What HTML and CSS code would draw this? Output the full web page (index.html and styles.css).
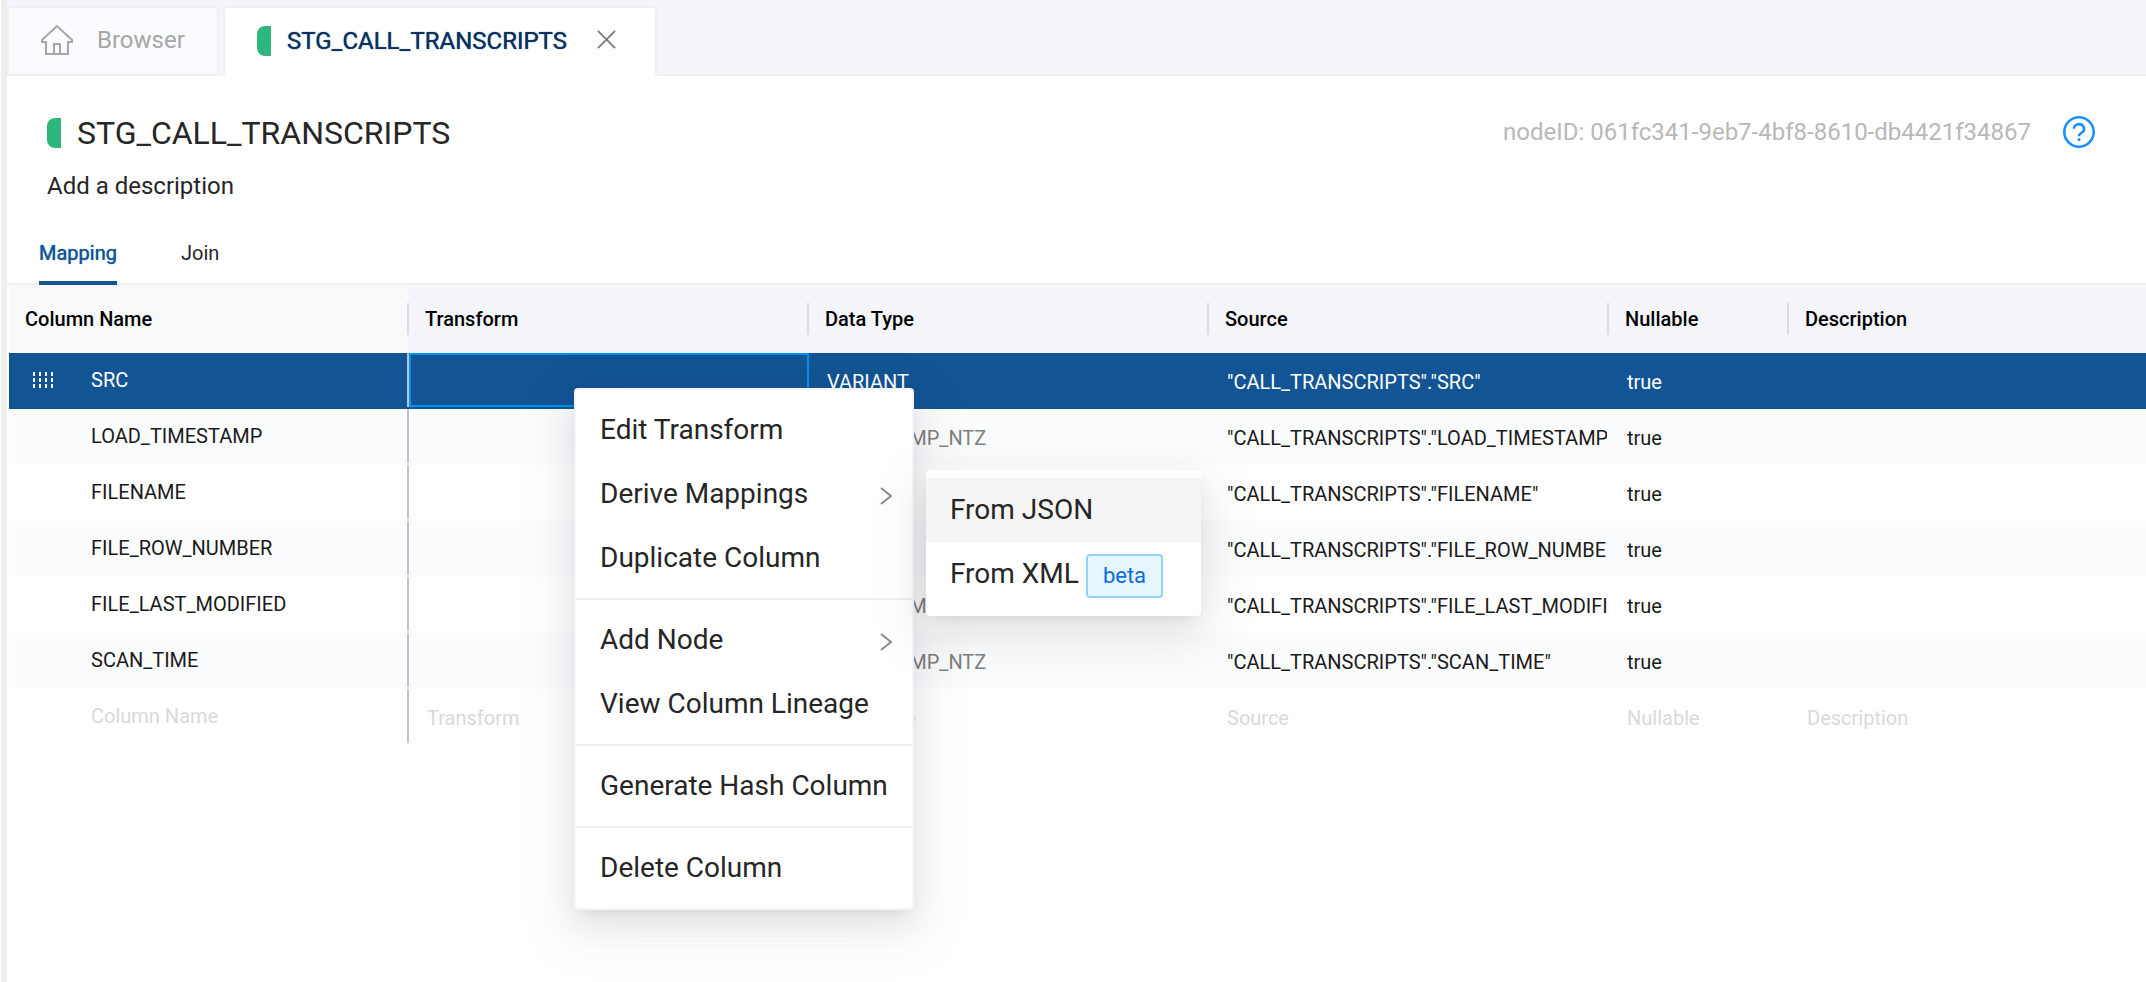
FILE: index.html
```html
<!DOCTYPE html>
<html lang="en">
<head>
<meta charset="utf-8">
<title>STG_CALL_TRANSCRIPTS</title>
<link rel="stylesheet" href="styles.css">
</head>
<body>
<div class="app">
  <nav class="tabs" aria-label="Open tabs">
    <button class="tab tab-home" type="button">
      <svg class="home-icon" viewBox="0 0 34 34" aria-hidden="true"><path d="M6 19H2v-2L17 3l15 14v2h-4v12H6zM14 31V21h6v10" /></svg>
      <span>Browser</span>
    </button>
    <div class="tab tab-active">
      <span class="node-mark"></span>
      <span class="tab-title">STG_CALL_TRANSCRIPTS</span>
      <button class="close" type="button" aria-label="Close tab">
        <svg viewBox="0 0 20 20" aria-hidden="true"><path d="M1 1l18 18M19 1L1 19" /></svg>
      </button>
    </div>
    <div class="tabs-rest"></div>
  </nav>

  <header class="node-head">
    <div class="title-row">
      <span class="node-mark"></span>
      <h1>STG_CALL_TRANSCRIPTS</h1>
      <span class="node-id">nodeID: 061fc341-9eb7-4bf8-8610-db4421f34867</span>
      <button class="help" type="button" aria-label="Help">
        <svg viewBox="0 0 32 32" aria-hidden="true"><circle cx="16" cy="16" r="14.7" /><path d="M11 12.8a5 4.6 0 1 1 7.4 4c-1.6.9-2.4 1.6-2.4 3.4" /><path class="dot" d="M14.7 22.3h2.6v2.6h-2.6z" /></svg>
      </button>
    </div>
    <p class="description">Add a description</p>
  </header>

  <div class="subtabs" role="tablist">
    <button class="subtab selected" type="button" role="tab" aria-selected="true">Mapping</button>
    <button class="subtab" type="button" role="tab" aria-selected="false">Join</button>
  </div>

  <main class="grid-wrap">
    <table class="grid">
      <colgroup><col class="wide"><col class="wide"><col class="wide"><col class="wide"><col class="narrow"><col></colgroup>
      <thead>
        <tr><th><span>Column Name</span></th><th><span>Transform</span></th><th><span>Data Type</span></th><th><span>Source</span></th><th><span>Nullable</span></th><th><span>Description</span></th></tr>
      </thead>
      <tbody>
        <tr class="picked"><td><div class="name"><svg class="grip" viewBox="0 0 20 16" aria-hidden="true"><path d="M1 0v16M7 0v16M13 0v16M19 0v16" /></svg>SRC</div></td><td class="focus"><div class="focus-box"></div></td><td class="type">VARIANT</td><td class="source">"CALL_TRANSCRIPTS"."SRC"</td><td>true</td><td></td></tr>
        <tr><td><div class="name">LOAD_TIMESTAMP</div></td><td></td><td class="type">TIMESTAMP_NTZ</td><td class="source">"CALL_TRANSCRIPTS"."LOAD_TIMESTAMP"</td><td>true</td><td></td></tr>
        <tr><td><div class="name">FILENAME</div></td><td></td><td class="type">STRING</td><td class="source">"CALL_TRANSCRIPTS"."FILENAME"</td><td>true</td><td></td></tr>
        <tr><td><div class="name">FILE_ROW_NUMBER</div></td><td></td><td class="type">NUMBER</td><td class="source">"CALL_TRANSCRIPTS"."FILE_ROW_NUMBER"</td><td>true</td><td></td></tr>
        <tr><td><div class="name">FILE_LAST_MODIFIED</div></td><td></td><td class="type">TIMESTAMP_NTZ</td><td class="source">"CALL_TRANSCRIPTS"."FILE_LAST_MODIFIED"</td><td>true</td><td></td></tr>
        <tr><td><div class="name">SCAN_TIME</div></td><td></td><td class="type">TIMESTAMP_NTZ</td><td class="source">"CALL_TRANSCRIPTS"."SCAN_TIME"</td><td>true</td><td></td></tr>
        <tr class="blank"><td><div class="name">Column Name</div></td><td>Transform</td><td>Data Type</td><td class="source">Source</td><td>Nullable</td><td>Description</td></tr>
      </tbody>
    </table>
  </main>
</div>

<div class="menu main-menu" role="menu">
  <button type="button" role="menuitem">Edit Transform</button>
  <button type="button" role="menuitem">Derive Mappings<svg class="chevron" viewBox="0 0 12 18" aria-hidden="true"><path d="M1 1l10 8-10 8" /></svg></button>
  <button type="button" role="menuitem">Duplicate Column</button>
  <hr>
  <button type="button" role="menuitem">Add Node<svg class="chevron" viewBox="0 0 12 18" aria-hidden="true"><path d="M1 1l10 8-10 8" /></svg></button>
  <button type="button" role="menuitem">View Column Lineage</button>
  <hr>
  <button type="button" role="menuitem">Generate Hash Column</button>
  <hr>
  <button type="button" role="menuitem">Delete Column</button>
</div>

<div class="menu sub-menu" role="menu">
  <button class="hovered" type="button" role="menuitem">From JSON</button>
  <button type="button" role="menuitem">From XML<span class="badge">beta</span></button>
</div>
</body>
</html>
```
FILE: styles.css
```css
* { box-sizing: border-box; }

body {
  margin: 0;
  min-height: 100vh;
  background: #fff;
  color: #262626;
  font: 24px/32px Roboto, sans-serif;
  overflow: hidden;
}

button {
  margin: 0;
  padding: 0;
  border: 0;
  background: none;
  color: inherit;
  font: inherit;
  text-align: left;
}

svg {
  display: block;
  fill: none;
  stroke: currentColor;
}

.app {
  min-height: 100vh;
  margin-left: 1px;
  border-left: 6px solid #eee;
}

/* Window tabs */
.tabs {
  display: flex;
  height: 76px;
  padding-top: 6px;
  background: #f4f5fa;
}

.tab {
  display: flex;
  align-items: center;
  border: 2px solid #f0f0f0;
  border-radius: 4px 4px 0 0;
}

.tab-home {
  gap: 23px;
  width: 212px;
  padding: 0 0 2px 31px;
  background: #fafbfe;
  color: #a6a6a6;
}

.home-icon {
  width: 34px;
  height: 34px;
  stroke-width: 2;
}

.tab-active {
  gap: 16px;
  width: 434px;
  margin-left: 4px;
  padding: 0 0 1px 32px;
  border-bottom-color: #fff;
  background: #fff;
  color: #0a3161;
}

.tab-title { text-shadow: 0 0 1px currentColor; }

.tabs-rest {
  flex: 1;
  border-bottom: 2px solid #f0f0f0;
}

.close {
  margin: 0 0 2px 14px;
  color: #7d7d7d;
}

.close svg {
  width: 19px;
  height: 19px;
  stroke-width: 2;
}

.node-mark {
  width: 14px;
  height: 30px;
  border-radius: 8px 0 0 8px;
  background: #2fb67c;
}

/* Node heading */
.node-head { padding: 36px 51px 0 40px; }

.title-row {
  display: flex;
  align-items: center;
  height: 42px;
}

h1 {
  flex: 1;
  margin: 0 0 0 16px;
  font-size: 32px;
  font-weight: 400;
}

.node-id {
  padding-bottom: 2px;
  color: #b8b8b8;
}

.help {
  margin-left: 32px;
  padding-bottom: 2px;
  color: #1890ff;
}

.help svg {
  width: 32px;
  height: 32px;
  stroke-width: 2.6;
}

.help .dot {
  fill: currentColor;
  stroke: none;
}

.description { margin: 16px 0 0; }

/* Section tabs */
.subtabs {
  display: flex;
  gap: 64px;
  height: 83px;
  padding-left: 32px;
  border-bottom: 2px solid #f0f0f0;
  font-size: 20px;
}

.subtab {
  height: 83px;
  padding-top: 22px;
  border-bottom: 4px solid transparent;
}

.subtab.selected {
  border-color: #135494;
  color: #135494;
  text-shadow: 0 0 1px currentColor;
}

/* Column grid */
.grid-wrap {
  border-top: 2px solid #f9f9f9;
  padding-left: 2px;
}

.grid {
  width: 100%;
  border-collapse: separate;
  border-spacing: 0;
  table-layout: fixed;
  color: #1a1a1a;
  font-size: 20px;
  line-height: 24px;
}

.wide { width: 400px; }
.narrow { width: 180px; }

th {
  height: 66px;
  padding: 0 0 2px;
  background: #f4f5fa;
  color: #000;
  font-weight: 500;
  text-align: left;
}

th:first-child { background: #f9f9f9; }

th span {
  display: block;
  padding: 4px 0 4px 16px;
  border-right: 2px solid #d9dce0;
}

th:last-child span { border: 0; }

td {
  height: 56px;
  padding: 2px 0 0 18px;
  overflow: hidden;
  white-space: nowrap;
}

td:first-child { padding: 0 0 2px; }

tbody tr:nth-child(even) { background: #fbfcfe; }
tbody .picked {
  background: #135494;
  color: #fff;
}

.name {
  display: flex;
  align-items: center;
  height: 54px;
  padding-left: 82px;
  border-right: 2px solid #bdc3c7;
}

.grip {
  width: 20px;
  height: 16px;
  margin: 0 38px 0 -58px;
  stroke-width: 2;
  stroke-dasharray: 4 2;
}

.type { color: #808080; }
.source { border-right: 2px solid transparent; }
.picked .type { color: #fff; }
.blank { color: #d9d9d9; }

.focus { padding: 0 0 2px; }

.focus-box {
  height: 54px;
  border: 2px solid #0091f2;
}

/* Context menus */
.menu {
  position: absolute;
  padding: 8px 0;
  border-radius: 4px;
  background: #fff;
  box-shadow: 0 6px 12px -8px #0000001f, 0 12px 32px #00000014, 0 18px 56px 16px #0000000d;
  font-size: 28px;
}

.menu button {
  display: flex;
  align-items: center;
  width: 100%;
  height: 64px;
  padding: 0 20px 0 24px;
  white-space: nowrap;
}

.menu hr {
  height: 2px;
  margin: 8px 0;
  border: 0;
  background: #f0f0f0;
}

.main-menu {
  top: 388px;
  left: 574px;
  width: 340px;
  border: 2px solid #f4f5fa;
}

.sub-menu {
  top: 470px;
  left: 926px;
  width: 275px;
  padding-bottom: 10px;
}

.chevron {
  width: 12px;
  height: 18px;
  margin: 4px 0 0 auto;
  color: #8c8c8c;
  stroke-width: 2;
}

.menu .hovered { background: #f5f5f5; }

.badge {
  margin: 4px 0 0 7px;
  padding: 4px 15px;
  border: 2px solid #91d5ff;
  border-radius: 4px;
  background: #e6f7ff;
  color: #0b6be0;
  font-size: 22px;
}
```
